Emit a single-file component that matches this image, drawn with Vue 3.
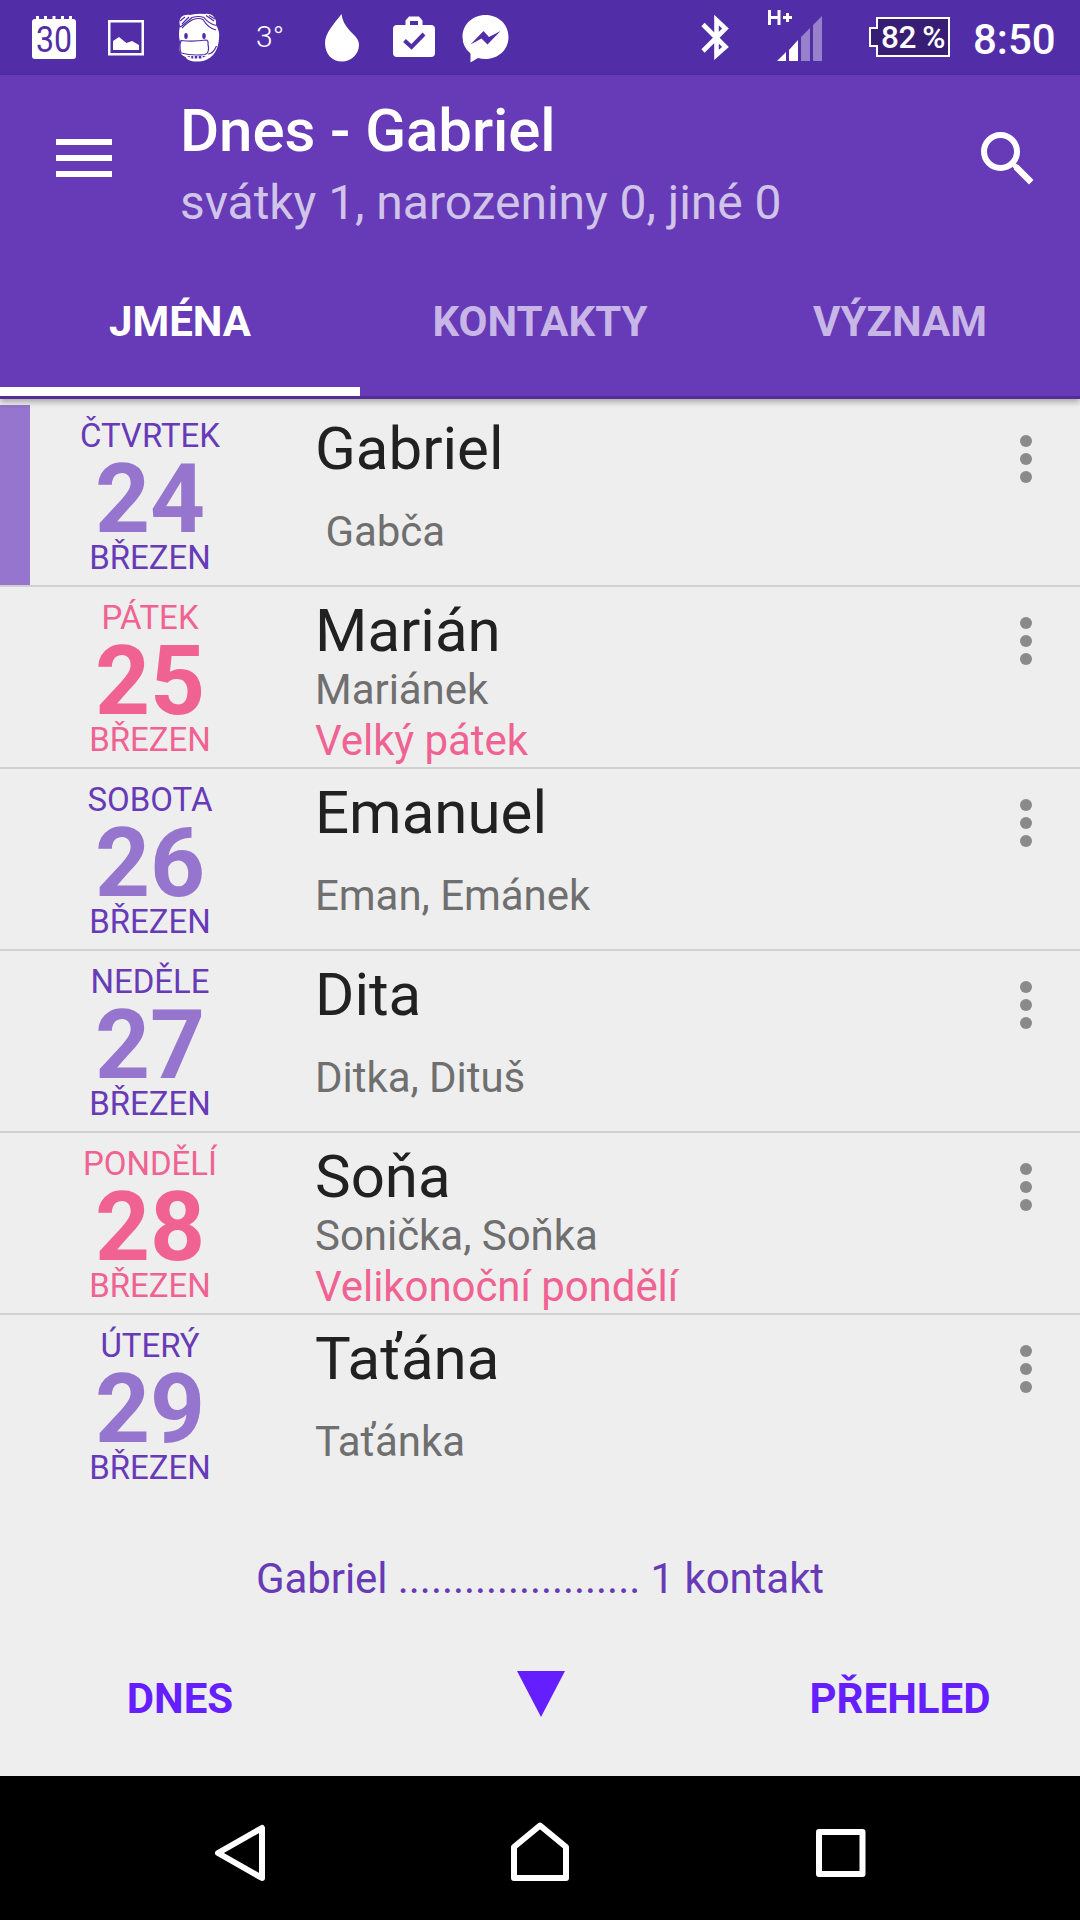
<script setup>
const tabs = [
  { label: 'JMÉNA', active: true },
  { label: 'KONTAKTY', active: false },
  { label: 'VÝZNAM', active: false },
]

const days = [
  { day: 'ČTVRTEK', date: 24, name: 'Gabriel', nick: ' Gabča', today: true },
  { day: 'PÁTEK', date: 25, name: 'Marián', nick: 'Mariánek', holiday: 'Velký pátek' },
  { day: 'SOBOTA', date: 26, name: 'Emanuel', nick: 'Eman, Emánek' },
  { day: 'NEDĚLE', date: 27, name: 'Dita', nick: 'Ditka, Dituš' },
  { day: 'PONDĚLÍ', date: 28, name: 'Soňa', nick: 'Sonička, Soňka', holiday: 'Velikonoční pondělí' },
  { day: 'ÚTERÝ', date: 29, name: 'Taťána', nick: 'Taťánka' },
]
</script>

<template>
  <div class="screen">
    <div class="status">
      <div class="status-left">
        <svg width="44" height="75" viewBox="32 0 44 75">
          <rect x="32" y="19" width="44" height="40" rx="3" fill="#fff" />
          <path d="M37.5 16v4M45.5 16v4M54 16v4M62.5 16v4M70.500 16v4" stroke="#fff" stroke-width="3" />
          <text x="36" y="52" class="cal" textLength="36" lengthAdjust="spacingAndGlyphs">30</text>
        </svg>
        <svg class="g-picture" width="36" height="75" viewBox="108 0 36 75">
          <rect x="109.250" y="21.250" width="33.500" height="33" fill="none" stroke="#fff" stroke-width="2.500" />
          <path d="M113 50V41L119 37L126.500 43L132 41L139 45V50z" fill="#fff" />
        </svg>
        <svg class="g-hippo" width="42" height="75" viewBox="178 0 42 75">
          <path d="M180 26C178 18 182 14 190 15Q198 13 205 14C212 13 217 18 216 25Q220 31 219 39C218 52 211 61 199 61.500C191 62 187 60 185.500 57Q180 55 179.500 50L180 42Q178 34 180 26z" fill="#fff" />
          <g fill="none" stroke="#512da8" stroke-width="1.200">
            <path d="M180 27Q185 24 192 17.500Q199 15.500 204 17.500Q209 24 216.500 25.500" />
            <path d="M182 28Q188 22 193 19.500Q199 17.500 203 19.500Q208 28 216 30" />
            <path d="M180 21L185 17M182 24L189 17M206 15.500L214 21M209 15.500L215 19" />
            <path d="M181 40.500Q193 42 206 40Q208.500 40 208 44Q210 53 205 54.500Q192 56 181 53Q179 46 181 40.500z" />
            <path d="M208 54Q213 54 216.500 46" />
          </g>
          <path d="M187 56H206L201 58.500H192z" fill="#512da8" />
          <path d="M190.500 55.500v2.500M194 56v3M198 56v3M202 56v2" stroke="#fff" stroke-width="1.500" />
          <ellipse cx="186" cy="36" rx="1.800" ry="3" fill="#512da8" />
          <ellipse cx="204" cy="36" rx="1.800" ry="3" fill="#512da8" />
        </svg>
        <span class="temp">3°</span>
        <svg class="g-drop" width="36" height="75" viewBox="324 0 36 75">
          <path d="M341.500 14C342.500 21 345 25 350 31C355 36 359 39 359 45C359 54 351 61.500 342 61.500C332 61.500 325 54 325 43C325 33 334 24 341.500 14z" fill="#fff" />
        </svg>
        <svg class="g-work" width="42" height="75" viewBox="393 0 42 75">
          <path fill-rule="evenodd" d="M397 25H405.500V20.500L409 16.500H419L422.500 20.500V25H431Q435 25 435 29V53Q435 57 431 57H397Q393 57 393 53V29Q393 25 397 25zM410 21V25H418V21z" fill="#fff" />
          <path d="M404.500 40.500L411.500 47L424 34" fill="none" stroke="#512da8" stroke-width="4" />
        </svg>
        <svg class="g-msg" width="47" height="75" viewBox="462 0 47 75">
          <path d="M485.500 15C498.500 15 508.500 24.500 508.500 37S498.500 59 485.500 59Q481.500 59 478 58L470.500 62.500V53.500Q462.500 47 462.500 37C462.500 24.500 472.500 15 485.500 15z" fill="#fff" />
          <path d="M470.500 44.500L483.500 31L489 37L500.500 31L487.500 44.500L481.500 38.500z" fill="#512da8" />
        </svg>
      </div>
      <div class="status-right">
        <svg width="28" height="75" viewBox="701 0 28 75">
          <path d="M703 24.500L725.500 47L716.500 55V20L725.500 28.500L703 51" fill="none" stroke="#fff" stroke-width="4.600" />
        </svg>
        <svg class="g-signal" width="56" height="75" viewBox="767 0 56 75">
          <path d="M769.500 10V25M779 10V25M769.500 17.500H779M783 17.500H792M787.500 13V22" stroke="#fff" stroke-width="3" />
          <path d="M777 61L786 52V61zM789 61V50L798 40V61z" fill="#fff" />
          <path d="M801 61V37L810 28V61zM813 61V25L822 16V61z" fill="#9681ca" />
        </svg>
        <div class="battery">
          <svg width="83" height="75" viewBox="868 0 83 75">
            <path d="M877 18H949V56H877V46H870V28H877z" fill="#371d73" stroke="#fff" stroke-width="2" />
          </svg>
          <span>82 %</span>
        </div>
        <span class="clock">8:50</span>
      </div>
    </div>

    <header class="header">
      <div class="appbar">
        <div class="menu"><i></i><i></i><i></i></div>
        <div class="titles">
          <div class="title">Dnes - Gabriel</div>
          <div class="subtitle">svátky 1, narozeniny 0, jiné 0</div>
        </div>
        <svg class="search" width="54" height="54" viewBox="980 131 54 54">
          <circle cx="1000.500" cy="151.500" r="16.500" fill="none" stroke="#fff" stroke-width="6" />
          <path d="M1014 165.500L1018 164.500L1033.500 180L1029 184.500L1014 169.500z" fill="#fff" />
          <path d="M1011 162L1017 168" stroke="#fff" stroke-width="5" />
        </svg>
      </div>
      <nav class="tabs">
        <div v-for="t in tabs" :key="t.label" class="tab" :class="{ active: t.active }">{{ t.label }}</div>
      </nav>
    </header>

    <main class="list">
      <div v-for="d in days" :key="d.date" class="row" :class="{ red: d.holiday, today: d.today }">
        <div class="mark"></div>
        <div class="date">
          <div class="small">{{ d.day }}</div>
          <div class="num">{{ d.date }}</div>
          <div class="small month">BŘEZEN</div>
        </div>
        <div class="info">
          <div class="name">{{ d.name }}</div>
          <div class="nick">{{ d.nick }}</div>
          <div v-if="d.holiday" class="holiday">{{ d.holiday }}</div>
        </div>
        <div class="more"><i></i><i></i><i></i></div>
      </div>
    </main>

    <div class="summary">Gabriel ...................... 1 kontakt</div>
    <div class="actions">
      <div class="action">DNES</div>
      <div class="action">
        <svg width="48" height="46" viewBox="0 0 48 46"><path d="M0 0H48L24 46z" fill="#651fff" /></svg>
      </div>
      <div class="action">PŘEHLED</div>
    </div>

    <div class="navbar">
      <svg width="52" height="60" viewBox="214 1822 52 60">
        <path d="M262 1828V1878L218 1853z" />
      </svg>
      <svg class="home" width="60" height="60" viewBox="510 1822 60 60">
        <path d="M514 1878V1847L540 1825.500L566 1847V1878z" />
      </svg>
      <svg width="52" height="60" viewBox="815 1822 52 60">
        <path d="M819 1832H862.500V1874H819z" />
      </svg>
    </div>
  </div>
</template>

<style>
body {
  margin: 0;
}
</style>

<style scoped>
.screen {
  width: 1080px;
  height: 1920px;
  display: flex;
  flex-direction: column;
  overflow: hidden;
  background: #eee;
  font-family: Roboto, sans-serif;
  font-weight: 400;
}
svg {
  display: block;
  flex: none;
}
.status {
  height: 75px;
  flex: none;
  display: flex;
  justify-content: space-between;
  background: #512da8;
  color: #fff;
}
.status-left,
.status-right {
  display: flex;
}
.status-left {
  padding-left: 32px;
}
.cal {
  font: 400 36px Roboto, sans-serif;
  fill: #512da8;
}
.g-picture {
  margin-left: 32px;
}
.g-hippo {
  margin-left: 34px;
}
.temp {
  width: 40px;
  margin-left: 36px;
  font-size: 30px;
  font-weight: 300;
  line-height: 74px;
}
.g-drop {
  margin-left: 28px;
}
.g-work {
  margin-left: 33px;
}
.g-msg {
  margin-left: 27px;
}
.status-right {
  width: 379px;
}
.g-signal {
  margin-left: 38px;
}
.battery {
  position: relative;
  margin-left: 45px;
}
.battery span {
  position: absolute;
  left: 13px;
  top: 0;
  font-size: 31.500px;
  font-weight: 500;
  line-height: 75px;
  letter-spacing: -0.300px;
  word-spacing: -1.500px;
  white-space: nowrap;
}
.clock {
  margin-left: 22px;
  font-size: 42px;
  font-weight: 500;
  line-height: 79px;
}
.header {
  position: relative;
  z-index: 1;
  flex: none;
  background: #673ab7;
  border-bottom: 3px solid #552c96;
  box-shadow: 0 3px 6px rgba(0, 0, 0, 0.3);
}
.appbar {
  height: 168px;
  display: flex;
}
.menu {
  width: 56px;
  margin: 64px 68px 0 56px;
  display: flex;
  flex-direction: column;
  gap: 10px;
}
.menu i {
  height: 6px;
  background: #fff;
}
.titles {
  flex: 1;
  padding-top: 20px;
  color: #fff;
  white-space: nowrap;
}
.title {
  font-size: 60px;
  font-weight: 500;
  line-height: 71px;
  letter-spacing: -0.080px;
}
.subtitle {
  margin-top: 8px;
  font-size: 48px;
  line-height: 57px;
  letter-spacing: -0.040px;
  color: #d1c4e9;
}
.search {
  margin: 56px 46px 0 0;
}
.tabs {
  height: 153px;
  display: flex;
}
.tab {
  flex: 1;
  box-sizing: border-box;
  padding-top: 54px;
  border-bottom: 9px solid transparent;
  text-align: center;
  font-size: 42px;
  font-weight: 700;
  line-height: 49px;
  color: #c8b6e6;
}
.tab.active {
  color: #fff;
  border-bottom-color: #fff;
}
.list {
  padding-top: 6px;
}
.row {
  height: 180px;
  display: flex;
  border-bottom: 2px solid #d1d1d1;
}
.row:last-child {
  border-bottom: 0;
}
.mark {
  width: 30px;
}
.today .mark {
  background: #9575cd;
}
.date {
  width: 240px;
  margin-right: 45px;
  padding-top: 12px;
  text-align: center;
  color: #673ab7;
}
.small {
  font-size: 33px;
  line-height: 38px;
}
.num {
  font-size: 96px;
  font-weight: 700;
  line-height: 88px;
  color: #9575cd;
}
.month {
  line-height: 30px;
}
.red .date,
.red .num {
  color: #f06292;
}
.info {
  flex: 1;
  padding-top: 8px;
}
.name {
  font-size: 60px;
  line-height: 71px;
  color: #212121;
}
.nick {
  margin-top: 24px;
  font-size: 42px;
  line-height: 47px;
  letter-spacing: -0.040px;
  color: #6f6f6f;
  white-space: pre;
}
.red .nick {
  margin-top: 0;
}
.holiday {
  font-size: 42px;
  line-height: 55px;
  letter-spacing: -0.060px;
  color: #f06292;
}
.more {
  margin: 30px 48px 0 0;
  display: flex;
  flex-direction: column;
  gap: 6px;
}
.more i {
  width: 12px;
  height: 12px;
  border-radius: 50%;
  background: #8a8a8a;
}
.summary {
  margin-top: 59px;
  text-align: center;
  font-size: 42px;
  line-height: 49px;
  letter-spacing: -0.060px;
  color: #673ab7;
}
.actions {
  height: 173px;
  display: flex;
  padding-top: 68px;
  box-sizing: border-box;
}
.action {
  flex: 1;
  display: flex;
  justify-content: center;
  padding-top: 3px;
  font-size: 42px;
  font-weight: 700;
  line-height: 49px;
  color: #651fff;
}
.action svg {
  margin: -3px 0 0 2px;
}
.navbar {
  flex: 1;
  display: flex;
  justify-content: space-between;
  padding: 46px 213px 0 214px;
  background: #000;
}
.navbar .home {
  margin-right: 1px;
}
.navbar path {
  fill: none;
  stroke: #fff;
  stroke-width: 6;
  stroke-linejoin: round;
}
</style>
